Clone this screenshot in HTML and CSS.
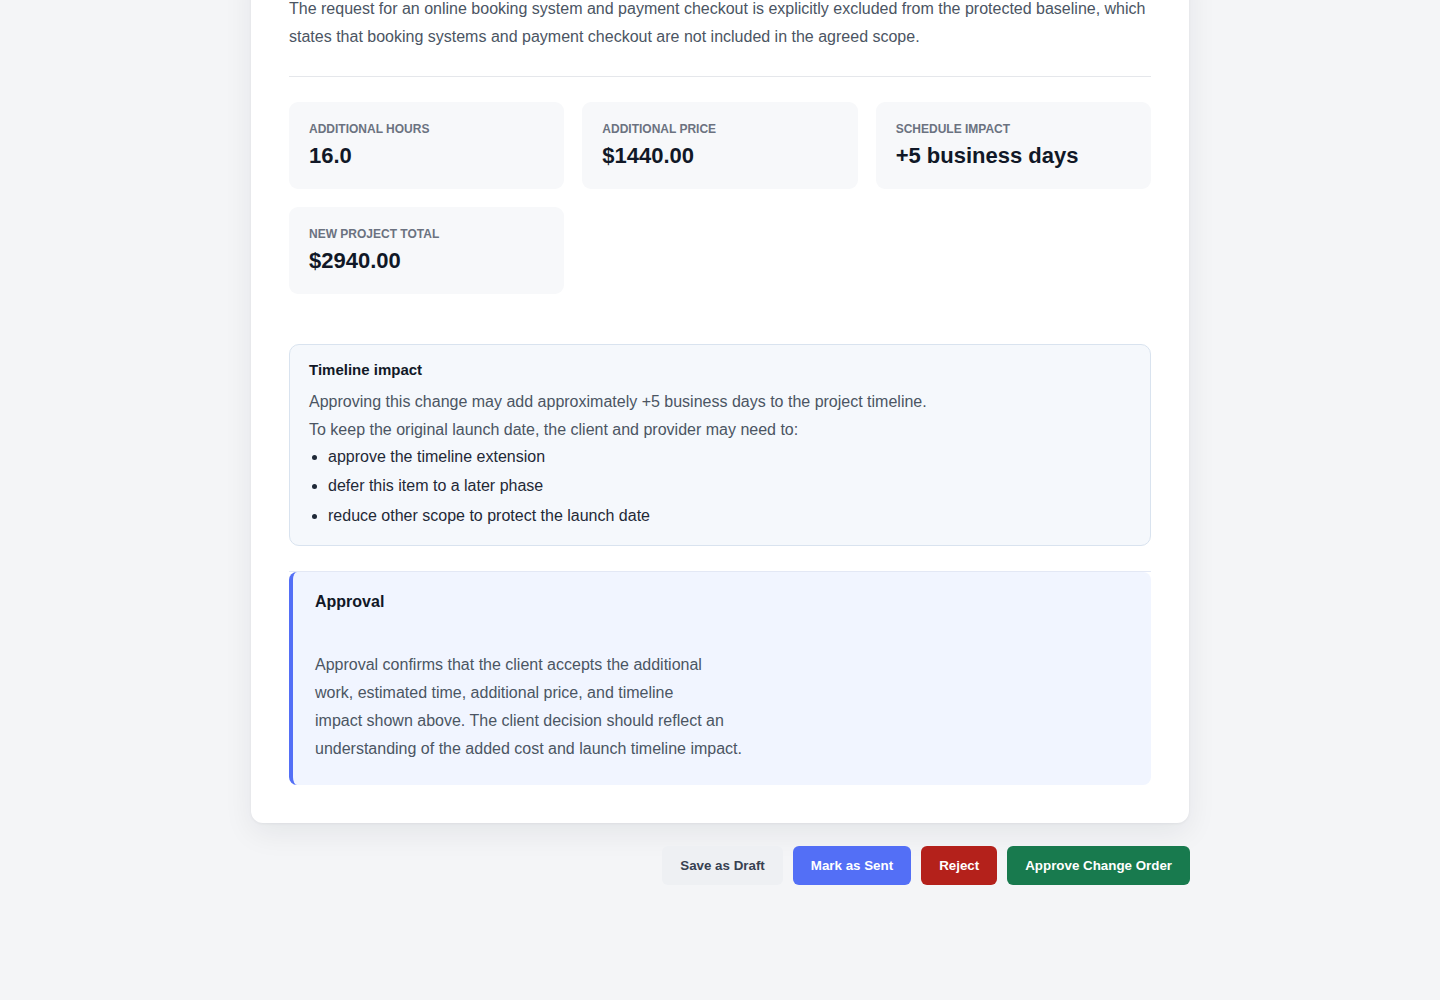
FILE: index.html
```html
<!DOCTYPE html>
<html lang="en">
<head>
<meta charset="utf-8">
<title>Change Order</title>
<link rel="stylesheet" href="styles.css">
</head>
<body>
<main class="page">
  <section class="sheet">
    <div class="summary">
      <p class="summary-text">The request for an online booking system and payment checkout is explicitly excluded from the protected baseline, which states that booking systems and payment checkout are not included in the agreed scope.</p>
    </div>

    <div class="stats">
      <div class="stat">
        <div class="stat-label">Additional hours</div>
        <div class="stat-value">16.0</div>
      </div>
      <div class="stat">
        <div class="stat-label">Additional price</div>
        <div class="stat-value">$1440.00</div>
      </div>
      <div class="stat">
        <div class="stat-label">Schedule impact</div>
        <div class="stat-value">+5 business days</div>
      </div>
      <div class="stat">
        <div class="stat-label">New project total</div>
        <div class="stat-value">$2940.00</div>
      </div>
    </div>

    <div class="timeline">
      <h3 class="timeline-title">Timeline impact</h3>
      <p class="timeline-text">Approving this change may add approximately +5 business days to the project timeline.</p>
      <p class="timeline-text">To keep the original launch date, the client and provider may need to:</p>
      <ul class="timeline-list">
        <li>approve the timeline extension</li>
        <li>defer this item to a later phase</li>
        <li>reduce other scope to protect the launch date</li>
      </ul>
    </div>

    <div class="approval-wrap">
      <div class="approval">
        <h3 class="approval-title">Approval</h3>
        <p class="approval-text">Approval confirms that the client accepts the additional<br>
          work, estimated time, additional price, and timeline<br>
          impact shown above. The client decision should reflect an<br>
          understanding of the added cost and launch timeline impact.</p>
      </div>
    </div>
  </section>

  <div class="actions">
    <button class="btn btn-draft" type="button">Save as Draft</button>
    <button class="btn btn-sent" type="button">Mark as Sent</button>
    <button class="btn btn-reject" type="button">Reject</button>
    <button class="btn btn-approve" type="button">Approve Change Order</button>
  </div>
</main>
</body>
</html>
```

FILE: styles.css
```css
* {
  box-sizing: border-box;
}

html, body {
  margin: 0;
  padding: 0;
}

body {
  background: #f4f5f7;
  font-family: "Liberation Sans", Arial, sans-serif;
  color: #111827;
  min-height: 1000px;
  overflow: hidden;
}

.page {
  width: 938px;
  margin: 0 auto;
  padding-bottom: 115px;
}

.sheet {
  margin-top: -43px;
  background: #ffffff;
  border-radius: 12px;
  padding: 38px 38px 38px;
  box-shadow: 0 10px 30px rgba(15, 23, 42, 0.07), 0 1px 3px rgba(15, 23, 42, 0.05);
}

.summary {
  padding-bottom: 25px;
  border-bottom: 1px solid #e5e7eb;
  margin-bottom: 25px;
}

.summary-text {
  margin: 0;
  font-size: 16px;
  line-height: 28px;
  color: #4b5563;
}

.stats {
  display: grid;
  grid-template-columns: repeat(3, 1fr);
  gap: 18px 18px;
  margin-bottom: 50px;
}

.stat {
  background: #f7f8fa;
  border-radius: 9px;
  padding: 19px 20px 18px;
  height: 87px;
}

.stat-label {
  font-size: 12px;
  line-height: 16px;
  font-weight: 700;
  text-transform: uppercase;
  color: #6b7280;
}

.stat-value {
  margin-top: 5px;
  font-size: 22px;
  line-height: 28px;
  font-weight: 700;
  color: #111827;
}

.timeline {
  background: #f5f8fc;
  border: 1px solid #d9e3ef;
  border-radius: 10px;
  padding: 16px 20px 15px 19px;
  margin-bottom: 25px;
}

.timeline-title {
  margin: 0 0 9px;
  font-size: 15px;
  line-height: 18px;
  font-weight: 700;
  color: #111827;
}

.timeline-text {
  margin: 0;
  font-size: 16px;
  line-height: 28px;
  color: #4b5563;
}

.timeline-list {
  margin: -3px 0 0;
  padding-left: 19px;
  font-size: 16px;
  line-height: 28px;
  color: #1f2937;
}

.timeline-list li {
  margin-top: 1.5px;
}

.approval-wrap {
  border-top: 1px solid #e3e8f5;
}

.approval {
  background: #f1f5ff;
  border-left: 4px solid #536ff6;
  border-radius: 8px;
  padding: 20px 22px 22px 22px;
}

.approval-title {
  margin: 0 0 39px;
  font-size: 16px;
  line-height: 20px;
  font-weight: 700;
  color: #111827;
}

.approval-text {
  margin: 0;
  font-size: 16px;
  line-height: 28px;
  color: #4b5563;
}

.actions {
  display: flex;
  justify-content: flex-end;
  gap: 10px;
  margin-top: 23px;
  margin-right: -1px;
}

.btn {
  border: 0;
  border-radius: 6px;
  height: 39px;
  padding: 0 18px;
  font-family: "Liberation Sans", Arial, sans-serif;
  font-size: 13.35px;
  font-weight: 700;
  cursor: pointer;
}

.btn-draft {
  background: #eef0f3;
  color: #374151;
}

.btn-sent {
  background: #536ff6;
  color: #ffffff;
}

.btn-reject {
  background: #b4211b;
  color: #ffffff;
}

.btn-approve {
  background: #187a4e;
  color: #ffffff;
}
```
